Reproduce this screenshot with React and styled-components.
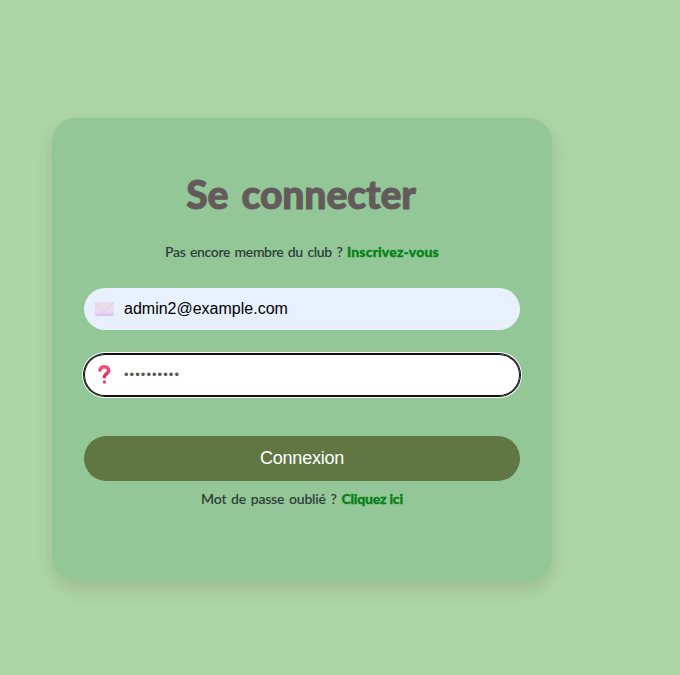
import React from "react";
import styled, { createGlobalStyle } from "styled-components";

const GlobalStyle = createGlobalStyle`
  *, *::before, *::after { box-sizing: border-box; }
  body { margin: 0; background: #add5a7; font-family: "Lato", sans-serif; overflow: hidden; }
`;
const Page = styled.main`
  min-height: 675px;
  padding: 118px 0 0 52px;
`;
const Card = styled.form`
  width: 500px;
  height: 463px;
  padding: 51px 32px 0;
  border-radius: 24px;
  background: #93c797;
  box-shadow: 0 8px 16px rgba(112, 112, 80, 0.24);
  display: flex;
  flex-direction: column;
`;
const Title = styled.h1`
  margin: 0 0 0 -2px;
  height: 50px;
  font-size: 39px;
  line-height: 50px;
  font-weight: 900;
  letter-spacing: -0.1px;
  word-spacing: 4px;
  color: #635b5b;
  text-align: center;
  white-space: nowrap;
  -webkit-text-stroke: 1px #635b5b;
`;
const Note = styled.p`
  margin: ${(p) => p.$margin};
  height: 20px;
  line-height: 20px;
  font-size: 14px;
  font-weight: 600;
  letter-spacing: ${(p) => p.$spacing};
  word-spacing: 1.5px;
  color: #2f403b;
  text-align: center;
  white-space: nowrap;
`;
const Link = styled.a`
  color: #078018;
  font-weight: 900;
  letter-spacing: ${(p) => p.$spacing};
  word-spacing: 0;
  -webkit-text-stroke: 0.3px #078018;
  cursor: pointer;
`;
const Field = styled.label`
  height: 42px;
  margin-bottom: 24px;
  padding-left: 10px;
  display: flex;
  align-items: center;
  border-radius: 21px;
  background: ${(p) => (p.$focused ? "#fff" : "#e8f0fe")};
  box-shadow: ${(p) => (p.$focused ? "inset 0 0 0 1px #101010, 0 0 0 1px #101010, 0 0 0 2px #fff" : "none")};
  svg { flex: none; }
`;
const Input = styled.input`
  flex: 1;
  min-width: 0;
  margin: 0 0 0 9px;
  padding: 0;
  border: 0;
  outline: 0;
  background: transparent;
  color: #000;
  font: 16px "Liberation Sans", Arial, sans-serif;
`;
const PasswordInput = styled(Input)`
  margin-bottom: 1px;
  color: #5b5555;
  font-size: 13px;
  letter-spacing: 1.05px;
`;
const Submit = styled.button`
  height: 45px;
  margin: 16px 0 8px;
  padding: 0;
  border: 0;
  border-radius: 23px;
  background: #607743;
  color: #fff;
  font: 18px "Liberation Sans", Arial, sans-serif;
  letter-spacing: -0.25px;
`;

const Envelope = () => (
  <svg width="21" height="16" viewBox="0 0 21 16">
    <defs>
      <linearGradient id="paper" x1="0" y1="0" x2="0" y2="1">
        <stop offset="0" stopColor="#e5dce8" />
        <stop offset="0.65" stopColor="#e8dcf1" />
        <stop offset="1" stopColor="#dcbff0" />
      </linearGradient>
    </defs>
    <rect x="1" y="1" width="19" height="14" rx="0.7" fill="url(#paper)" />
    <path d="M1.5 14.2 8 8.7M19.5 14.2 13 8.7" stroke="#eee3f5" strokeWidth=".7" fill="none" />
    <path d="M1.2 1.5 9.4 8.6q1.1.9 2.2 0L19.8 1.5" stroke="#dacbdd" strokeWidth=".6" fill="#e9dfe9" />
  </svg>
);
const Question = () => (
  <svg width="21" height="20" viewBox="0 0 21 20">
    <defs>
      <linearGradient id="mark" x1="0" y1="0" x2="0" y2="1">
        <stop offset="0" stopColor="#fa5277" />
        <stop offset="1" stopColor="#ef2450" />
      </linearGradient>
    </defs>
    <path d="M6 5.1C6.2.7 14.7.4 14.7 5.4c0 3.4-4.3 3.3-4.3 6.4" fill="none" stroke="url(#mark)" strokeWidth="3.5" strokeLinecap="round" strokeLinejoin="round" />
    <circle cx="10.4" cy="17" r="1.7" fill="#f13a68" />
  </svg>
);

export default function App() {
  return (
    <>
      <GlobalStyle />
      <Page>
        <Card onSubmit={(e) => e.preventDefault()}>
          <Title>Se connecter</Title>
          <Note $margin="23px 0 26px" $spacing="-0.38px">
            Pas encore membre du club ? <Link $spacing="0.15px">Inscrivez-vous</Link>
          </Note>
          <Field>
            <Envelope />
            <Input type="email" defaultValue="admin2@example.com" />
          </Field>
          <Field $focused>
            <Question />
            <PasswordInput type="password" defaultValue="motdepasse" />
          </Field>
          <Submit type="submit">Connexion</Submit>
          <Note $margin="0" $spacing="-0.22px">
            Mot de passe oublié ? <Link $spacing="-0.2px">Cliquez ici</Link>
          </Note>
        </Card>
      </Page>
    </>
  );
}
